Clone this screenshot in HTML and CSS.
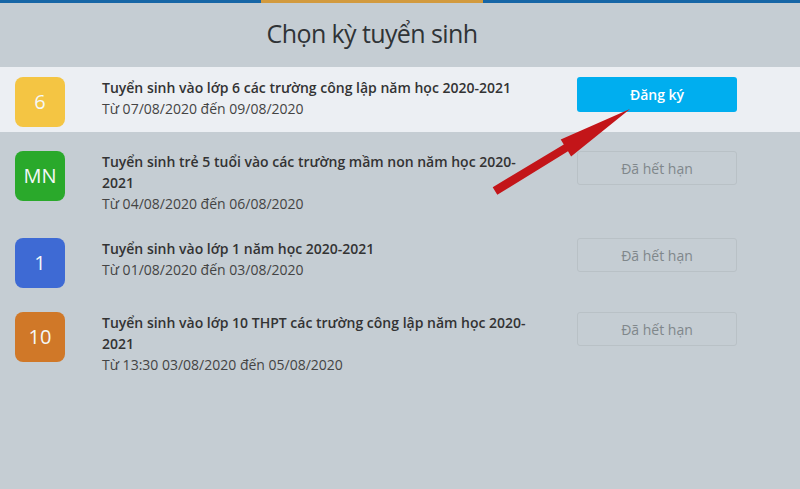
FILE: index.html
```html
<!DOCTYPE html>
<html lang="vi">
<head>
    <meta charset="UTF-8">
    <meta name="viewport" content="width=device-width, initial-scale=1.0">
    <title>Chọn kỳ tuyển sinh</title>
    <link rel="stylesheet" href="styles.css">
</head>
<body>
    <div class="topbar"><span class="tab-mark"></span></div>
    <h1 class="heading">Chọn kỳ tuyển sinh</h1>

    <div class="list">
        <div class="item active">
            <div class="badge yellow">6</div>
            <div class="info">
                <div class="name">Tuyển sinh vào lớp 6 các trường công lập năm học 2020-<wbr>2021</div>
                <div class="date">Từ 07/08/2020 đến 09/08/2020</div>
            </div>
            <button class="btn primary">Đăng ký</button>
        </div>

        <div class="item">
            <div class="badge green">MN</div>
            <div class="info">
                <div class="name">Tuyển sinh trẻ 5 tuổi vào các trường mầm non năm học 2020-<wbr>2021</div>
                <div class="date">Từ 04/08/2020 đến 06/08/2020</div>
            </div>
            <button class="btn expired">Đã hết hạn</button>
        </div>

        <div class="item">
            <div class="badge blue">1</div>
            <div class="info">
                <div class="name">Tuyển sinh vào lớp 1 năm học 2020-<wbr>2021</div>
                <div class="date">Từ 01/08/2020 đến 03/08/2020</div>
            </div>
            <button class="btn expired">Đã hết hạn</button>
        </div>

        <div class="item">
            <div class="badge orange">10</div>
            <div class="info">
                <div class="name">Tuyển sinh vào lớp 10 THPT các trường công lập năm học 2020-<wbr>2021</div>
                <div class="date">Từ 13:30 03/08/2020 đến 05/08/2020</div>
            </div>
            <button class="btn expired">Đã hết hạn</button>
        </div>
    </div>

    <!-- hint arrow pointing at the register button -->
    <svg class="hint-arrow" width="800" height="489" viewBox="0 0 800 489">
        <polygon points="492.7,187.2 563.8,144.5 560.7,139.4 630,109 571.1,156.4 568,151.3 497.3,194.8" fill="#c31519"/>
    </svg>
</body>
</html>
```

FILE: styles.css
```css
body {
    margin: 0;
    height: 489px;
    background: #c5cdd3;
    font-family: "Open Sans", Arial, sans-serif;
    color: #333;
    position: relative;
    overflow: hidden;
}
.topbar {
    height: 3px;
    background: #1766a6;
    padding-left: 261px;
}
.tab-mark {
    display: block;
    width: 222px;
    height: 3px;
    background: #d29a3e;
}
.heading {
    margin: 0;
    height: 64px;
    line-height: 60px;
    padding-right: 56px;
    text-align: center;
    font-size: 25px;
    font-weight: 400;
    letter-spacing: -0.6px;
    color: #2f3336;
}
.list {
    display: flex;
    flex-direction: column;
    gap: 9px;
}
.item {
    display: flex;
    align-items: flex-start;
    padding: 10px 63px 5px 15px;
}
.item.active {
    background: #eceff3;
}
.badge {
    flex: none;
    width: 50px;
    height: 50px;
    border-radius: 8px;
    color: #f4f8f8;
    font-size: 20px;
    line-height: 50px;
    text-align: center;
}
.badge.yellow { background: #f4c543; }
.badge.green { background: #2aa92b; }
.badge.blue { background: #3e6ad4; }
.badge.orange { background: #d07828; }
.info {
    flex: 1;
    margin: 0 35px 0 37px;
    font-size: 14px;
    line-height: 21px;
}
.name {
    font-weight: 600;
    color: #333;
}
.date {
    color: #444;
}
.btn {
    flex: none;
    width: 160px;
    height: 35px;
    border-radius: 3px;
    font-family: inherit;
    font-size: 14px;
    cursor: pointer;
}
.btn.primary {
    background: #00aeef;
    border: none;
    color: #fff;
    font-weight: 600;
}
.btn.expired {
    height: 34px;
    background: transparent;
    border: 1px solid #b9c1c6;
    color: #80878b;
}
.hint-arrow {
    position: absolute;
    left: 0;
    top: 0;
    pointer-events: none;
}
```
